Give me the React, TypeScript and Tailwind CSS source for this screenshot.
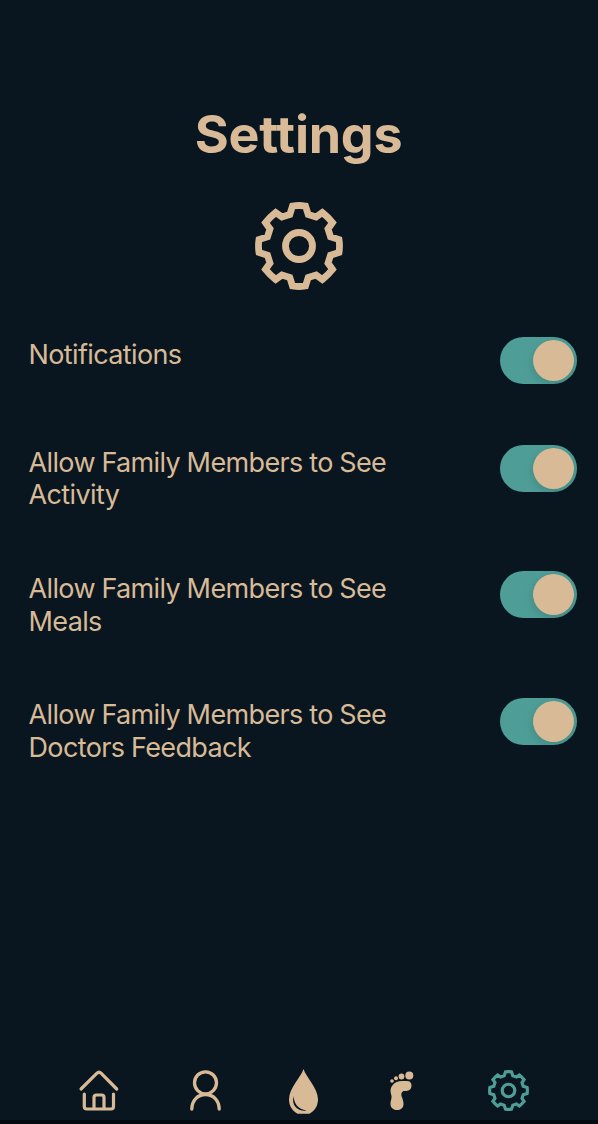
import React from "react";

const GEAR =
  "M-6.5-40Q0-41 6.5-40L9.2-31.5L17.1-29L23.3-33.5Q29-29 33.5-23.3L29-17.1L31.5-9.2L40-6.5Q41 0 40 6.5L31.5 9.2L29 17.1L33.5 23.3Q29 29 23.3 33.5L17.1 29L9.2 31.5L6.5 40Q0 41-6.5 40L-9.2 31.5L-17.1 29L-23.3 33.5Q-29 29-33.5 23.3L-29 17.1L-31.5 9.2L-40 6.5Q-41 0-40-6.5L-31.5-9.2L-29-17.1L-33.5-23.3Q-29-29-23.3-33.5L-17.1-29L-9.2-31.5Z";

function Gear({ className }: { className: string }) {
  return (
    <svg viewBox="-44 -44 88 88" className={className} fill="none" stroke="currentColor" strokeWidth="6.8">
      <path d={GEAR} />
      <circle r="13.5" />
    </svg>
  );
}

function Toggle() {
  return (
    <button
      role="switch"
      aria-checked="true"
      className="flex h-[47px] w-[77.500px] shrink-0 items-center justify-end overflow-hidden rounded-full bg-[#4e9e97] pr-[3px]"
    >
      <span className="size-[41px] rounded-full bg-[#d8ba96] shadow-[0_3px_10px_rgba(0,0,0,0.15)]" />
    </button>
  );
}

function Row({ lines }: { lines: string[] }) {
  return (
    <div className="flex items-start justify-between">
      <div className="pt-[1.700px] text-[27px] leading-[32.400px] tracking-[-0.62px] whitespace-nowrap [word-spacing:-0.5px]">
        {lines.map((line) => (
          <div key={line}>{line}</div>
        ))}
      </div>
      <Toggle />
    </div>
  );
}

export default function App() {
  return (
    <div className="flex h-[1124px] w-[598px] flex-col overflow-hidden border-b-4 border-[#030a10] bg-[#091620] font-['Inter',sans-serif] text-[#d8ba96]">
      <h1 className="mt-[103px] -ml-px text-center text-[52px] leading-[64px] font-bold tracking-[-0.25px]">Settings</h1>
      <Gear className="mt-[35.400px] size-[88px] self-center" />
      <main className="mt-[46.800px] flex flex-col pr-[21px] pl-[28.500px]">
        <div className="h-[108px]"><Row lines={["Notifications"]} /></div>
        <div className="h-[126.300px]"><Row lines={["Allow Family Members to See", "Activity"]} /></div>
        <div className="h-[126.300px]"><Row lines={["Allow Family Members to See", "Meals"]} /></div>
        <div className="h-[126px]"><Row lines={["Allow Family Members to See", "Doctors Feedback"]} /></div>
      </main>
      <nav className="mt-auto flex h-[60px] items-start pl-[70px]">
        <svg viewBox="0 0 60 60" className="mr-[50px] size-[60px]" fill="none" stroke="currentColor" strokeWidth="3.200" strokeLinecap="round" strokeLinejoin="round">
          <path d="M11 29L27 13.2Q29 11.200 31 13.2L46.700 29M14.300 34V46.500Q14.300 49 16.800 49H41Q43.500 49 43.500 46.500V34M24 49V37.500Q24 35 26.500 35H31.500Q34 35 34 37.500V49" />
        </svg>
        <svg viewBox="0 0 60 60" className="mr-[35px] size-[60px]" fill="none" stroke="currentColor" strokeWidth="3.300" strokeLinecap="round">
          <circle cx="25.500" cy="22.800" r="11" />
          <path d="M11.800 49C12 40.500 17.500 34.500 25.500 34.500S39 40.500 39.200 49" />
        </svg>
        <svg viewBox="0 0 60 60" className="mr-[40px] size-[60px]">
          <path d="M28.500 9C26 17 14 28 14 39.500C14 46 17.500 51 22.500 53.700H34.500C39.500 51 43 46 43 39.500C43 28 31 17 28.500 9Z" fill="currentColor" />
          <path d="M18.800 36C18.500 43 23 49.300 31.500 50.500C24 51.800 15.500 46 18.800 36Z" fill="#091620" />
        </svg>
        <svg viewBox="0 0 60 60" className="mr-[53px] size-[60px]" fill="currentColor">
          <circle cx="34.300" cy="15.500" r="4" />
          <circle cx="26.500" cy="16.500" r="2.900" />
          <circle cx="21" cy="18.300" r="2" />
          <circle cx="17" cy="21" r="1.800" />
          <path d="M27 21H32C35 21 36.500 23 36.500 25.500C36.500 30 33 31 30 31C27 31 26 33 26.500 36C27.500 39 28.500 41 28.500 44C28.500 48 25.500 50 22 50C18 50 15.500 47.500 15.500 44C15.500 40 17.500 38 16 34C14 27 19 21 27 21Z" />
        </svg>
        <Gear className="mt-[10px] size-[41px] text-[#4e9e97]" />
      </nav>
    </div>
  );
}
